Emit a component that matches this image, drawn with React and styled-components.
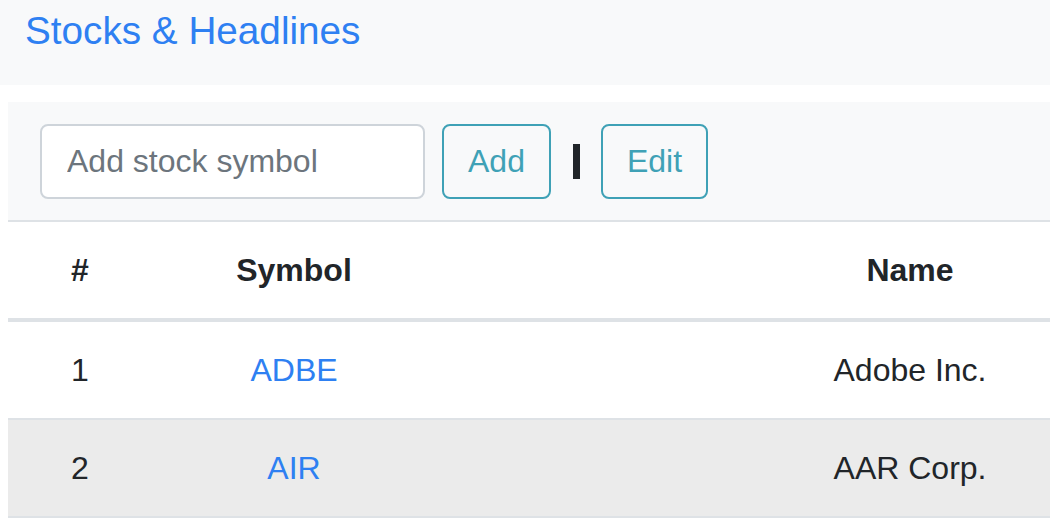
import React from 'react';
import styled, { createGlobalStyle } from 'styled-components';

const stocks = [
  { symbol: 'ADBE', name: 'Adobe Inc.' },
  { symbol: 'AIR', name: 'AAR Corp.' },
];

export default function App() {
  return (
    <>
      <GlobalStyle />
      <Header>
        <Brand href="#">Stocks &amp; Headlines</Brand>
      </Header>
      <Main>
        <Toolbar>
          <SymbolInput placeholder="Add stock symbol" />
          <OutlineButton>Add</OutlineButton>
          <Divider />
          <OutlineButton>Edit</OutlineButton>
        </Toolbar>
        <Table>
          <thead>
            <tr>
              <HeadCell $width={144}>#</HeadCell>
              <HeadCell $width={284}>Symbol</HeadCell>
              <HeadCell $width={948}>Name</HeadCell>
            </tr>
          </thead>
          <tbody>
            {stocks.map((s, i) => (
              <Row key={s.symbol} $striped={i % 2 === 1}>
                <Cell>{i + 1}</Cell>
                <Cell>
                  <SymbolLink href="#">{s.symbol}</SymbolLink>
                </Cell>
                <Cell>{s.name}</Cell>
              </Row>
            ))}
          </tbody>
        </Table>
      </Main>
    </>
  );
}

const GlobalStyle = createGlobalStyle`
  html, body {
    margin: 0;
    overflow: hidden;
    background: #fff;
  }
  body {
    font-family: "Liberation Sans", Arial, sans-serif;
    color: #212529;
  }
`

const Header = styled.header`
  height: 85px;
  background: #f8f9fa;
  padding: 2px 25px 0;
  box-sizing: border-box;
`

const Brand = styled.a`
  display: block;
  font-size: 38.7px;
  line-height: 58px;
  color: #2e80f2;
  text-decoration: none;
`

const Main = styled.main`
  margin: 17px 0 0 8px;
  width: 1376px;
`

const Toolbar = styled.div`
  display: flex;
  align-items: center;
  height: 120px;
  padding: 0 32px;
  box-sizing: border-box;
  background: #f8f9fa;
  border-bottom: 2px solid #dee2e6;
`

const SymbolInput = styled.input`
  width: 385px;
  height: 75px;
  box-sizing: border-box;
  border: 2px solid #ced4da;
  border-radius: 8px;
  padding: 0 25px;
  font-family: "Liberation Sans", Arial, sans-serif;
  font-size: 32px;
  color: #495057;
  background: #fff;
  outline: none;
  &::placeholder {
    color: #6c757d;
  }
`

const OutlineButton = styled.button`
  height: 75px;
  box-sizing: border-box;
  margin-left: 17px;
  padding: 0 24px;
  border: 2px solid #3fa1b6;
  border-radius: 8px;
  background: transparent;
  color: #3fa1b6;
  font-family: "Liberation Sans", Arial, sans-serif;
  font-size: 32px;
`

const Divider = styled.span`
  width: 7px;
  height: 35px;
  margin-left: 22px;
  background: #212529;
  & + ${OutlineButton} {
    margin-left: 21px;
  }
`

const Table = styled.table`
  border-collapse: collapse;
  table-layout: fixed;
  width: 1376px;
  font-size: 32px;
  line-height: 48px;
`

const HeadCell = styled.th`
  box-sizing: border-box;
  width: ${p => p.$width}px;
  padding: 24px;
  text-align: center;
  font-weight: bold;
  border-bottom: 4px solid #dee2e6;
`

const Row = styled.tr`
  background: ${p => (p.$striped ? '#ebebeb' : '#fff')};
`

const Cell = styled.td`
  padding: 24px;
  text-align: center;
  border-bottom: 2px solid #dee2e6;
`

const SymbolLink = styled.a`
  color: #2e80f2;
  text-decoration: none;
`
